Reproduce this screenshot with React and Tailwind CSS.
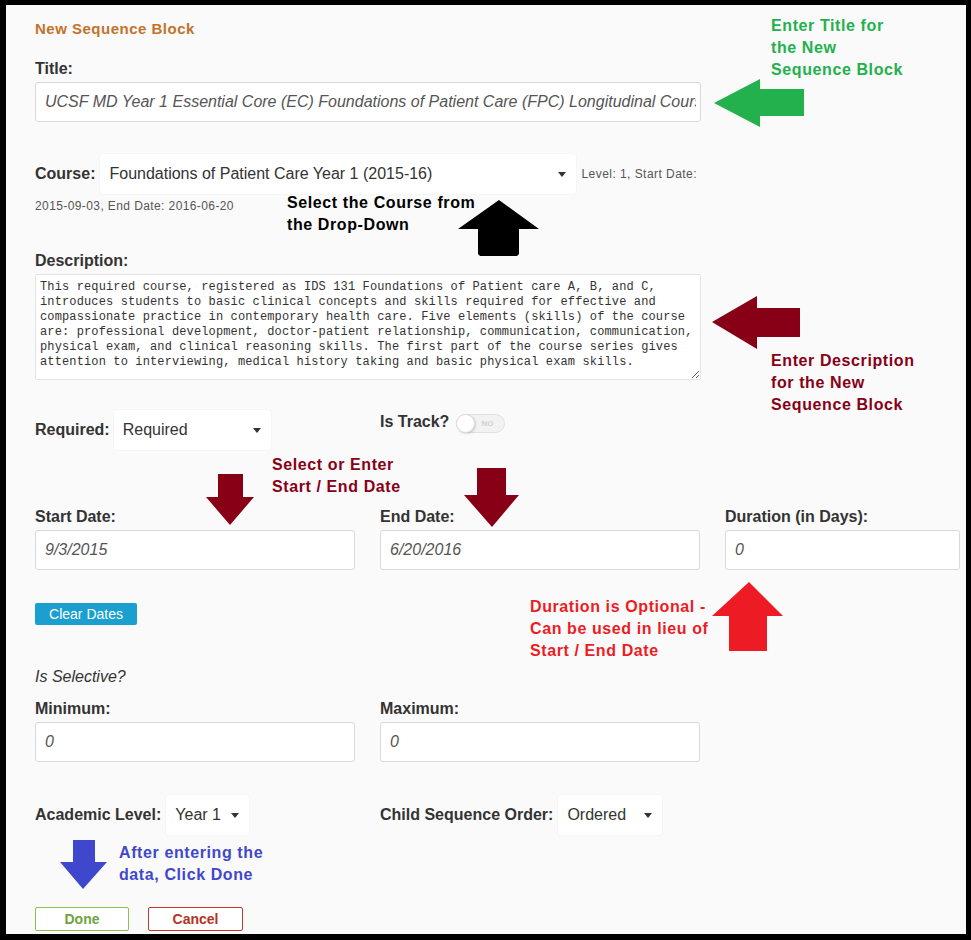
import React from 'react';

const font = { fontFamily: '"Liberation Sans", Arial, sans-serif' };

const description =
  'This required course, registered as IDS 131 Foundations of Patient care A, B, and C,\n' +
  'introduces students to basic clinical concepts and skills required for effective and\n' +
  'compassionate practice in contemporary health care. Five elements (skills) of the course\n' +
  'are: professional development, doctor-patient relationship, communication, communication,\n' +
  'physical exam, and clinical reasoning skills. The first part of the course series gives\n' +
  'attention to interviewing, medical history taking and basic physical exam skills.';

const Label = ({ children, className = '' }) => (
  <div className={`text-[16px] leading-[20px] font-bold text-[#333] ${className}`}>{children}</div>
);

const TextInput = ({ value, width = 'w-[320px]' }) => (
  <input
    readOnly
    defaultValue={value}
    className={`${width} h-[40px] mt-[3px] bg-white border border-[#d9d9d9] rounded-[3px] pl-[9px] pr-[4px] text-[16px] italic text-[#555] outline-none`}
  />
);

const Caret = () => (
  <span className="inline-block w-0 h-0 border-x-[4px] border-x-transparent border-t-[5px] border-t-[#333]" />
);

// fake select, the native one draws its own chrome
const Select = ({ value, className = '' }) => (
  <div
    className={`h-[40px] bg-white rounded-[3px] shadow-[0_0_2px_rgba(0,0,0,0.07)] flex items-center justify-between pl-[9px] pr-[10px] text-[16px] text-[#333] ${className}`}
  >
    <span>{value}</span>
    <Caret />
  </div>
);

const Note = ({ lines, color, className }) => (
  <div className={`absolute text-[16px] leading-[22px] font-bold tracking-[0.6px] ${className}`} style={{ color }}>
    {lines.map((l) => (
      <div key={l}>{l}</div>
    ))}
  </div>
);

export default function App() {
  return (
    <div style={font} className="relative w-[971px] h-[940px] bg-black pl-[6px] pt-[5px] pr-[5px] pb-[6px]">
      <div className="h-full bg-[#fafafa] pl-[29px] pt-[13px]">
        <div className="text-[15px] leading-[22px] font-bold tracking-[0.5px] text-[#c4722a]">New Sequence Block</div>

        <Label className="mt-[19px]">Title:</Label>
        <TextInput
          width="w-[666px]"
          value="UCSF MD Year 1 Essential Core (EC) Foundations of Patient Care (FPC) Longitudinal Course"
        />

        <div className="mt-[32px] flex items-center">
          <Label>Course:</Label>
          <Select className="ml-[5px] w-[476px]" value="Foundations of Patient Care Year 1 (2015-16)" />
          <span className="ml-[5px] text-[12px] tracking-[0.45px] text-[#555]">Level: 1, Start Date:</span>
        </div>
        <div className="mt-[4px] text-[12px] leading-[17px] tracking-[0.4px] text-[#555]">
          2015-09-03, End Date: 2016-06-20
        </div>

        <Label className="mt-[36px]">Description:</Label>
        <textarea
          readOnly
          defaultValue={description}
          className="block mt-[3px] w-[666px] h-[106px] bg-white border border-[#e3e3e3] rounded-[2px] pl-[4px] pt-[5px] text-[12px] leading-[15px] tracking-[0.13px] text-[#333] outline-none"
          style={{ fontFamily: '"Liberation Mono", monospace' }}
        />

        <div className="mt-[30px] flex items-start">
          <div className="flex items-center w-[345px]">
            <Label>Required:</Label>
            <Select className="ml-[4px] w-[157px]" value="Required" />
          </div>
          <div className="flex items-center pt-[1px]">
            <Label>Is Track?</Label>
            <div className="ml-[7px] mt-[3px] w-[49px] h-[19px] rounded-full border border-[#e0e0e0] bg-[#f2f2f2] flex items-center">
              <div className="w-[19px] h-[19px] -ml-[1px] rounded-full bg-white border border-[#ddd] shadow-[1px_1px_2px_rgba(0,0,0,0.15)]" />
              <span className="ml-[6px] text-[8px] font-bold text-[#d0d0d0]">NO</span>
            </div>
          </div>
        </div>

        <div className="mt-[57px] grid grid-cols-[345px_345px_235px]">
          <div>
            <Label>Start Date:</Label>
            <TextInput value="9/3/2015" />
          </div>
          <div>
            <Label>End Date:</Label>
            <TextInput value="6/20/2016" />
          </div>
          <div>
            <Label>Duration (in Days):</Label>
            <TextInput width="w-[235px]" value="0" />
          </div>
        </div>

        <button className="mt-[33px] block w-[102px] h-[22px] rounded-[2px] bg-[#1a9fcf] text-white text-[14px] leading-[22px]">
          Clear Dates
        </button>

        <div className="mt-[42px] text-[16px] leading-[20px] italic text-[#333]">Is Selective?</div>

        <div className="mt-[12px] grid grid-cols-[345px_345px]">
          <div>
            <Label>Minimum:</Label>
            <TextInput value="0" />
          </div>
          <div>
            <Label>Maximum:</Label>
            <TextInput value="0" />
          </div>
        </div>

        <div className="mt-[33px] flex items-center">
          <div className="flex items-center w-[345px]">
            <Label>Academic Level:</Label>
            <Select className="ml-[5px] w-[83px] h-[39px]" value="Year 1" />
          </div>
          <div className="flex items-center">
            <Label>Child Sequence Order:</Label>
            <Select className="ml-[5px] w-[104px] h-[39px]" value="Ordered" />
          </div>
        </div>

        <div className="mt-[72px] flex gap-[19px]">
          <button className="w-[94px] h-[24px] rounded-[2px] border border-[#8cc152] text-[#6fa33f] text-[14px] font-bold bg-white">
            Done
          </button>
          <button className="w-[95px] h-[24px] rounded-[2px] border border-[#c0392b] text-[#b23426] text-[14px] font-bold bg-white">
            Cancel
          </button>
        </div>
      </div>

      {/* annotation overlays */}
      <svg className="absolute left-0 top-0 pointer-events-none" width="971" height="940">
        <polygon points="714,103 760,79 760,89 804,89 804,116 760,116 760,127" fill="#22b14c" />
        <polygon points="499,200 539,229 519,229 519,254 517,256 480,256 478,254 478,229 458,229" fill="#000" />
        <polygon points="712,322 757,296 757,308 800,308 800,337 757,337 757,349" fill="#880015" />
        <polygon points="218,474 243,474 243,497 254,497 230,525 206,497 218,497" fill="#880015" />
        <polygon points="477,468 506,468 506,495 519,495 492,527 464,495 477,495" fill="#880015" />
        <polygon points="749,582 783,616 767,616 767,651 729,651 729,616 712,616" fill="#ed1c24" />
        <polygon points="73,840 95,840 95,862 107,862 83,889 60,862 73,862" fill="#3f48cc" />
      </svg>

      <Note className="left-[771px] top-[15px]" color="#22b14c" lines={['Enter Title for', 'the New', 'Sequence Block']} />
      <Note className="left-[287px] top-[192px]" color="#000" lines={['Select the Course from', 'the Drop-Down']} />
      <Note
        className="left-[771px] top-[350px]"
        color="#880015"
        lines={['Enter Description', 'for the New', 'Sequence Block']}
      />
      <Note className="left-[272px] top-[454px]" color="#880015" lines={['Select or Enter', 'Start / End Date']} />
      <Note
        className="left-[530px] top-[596px]"
        color="#ed1c24"
        lines={['Duration is Optional -', 'Can be used in lieu of', 'Start / End Date']}
      />
      <Note className="left-[119px] top-[842px]" color="#3f48cc" lines={['After entering the', 'data, Click Done']} />
    </div>
  );
}
